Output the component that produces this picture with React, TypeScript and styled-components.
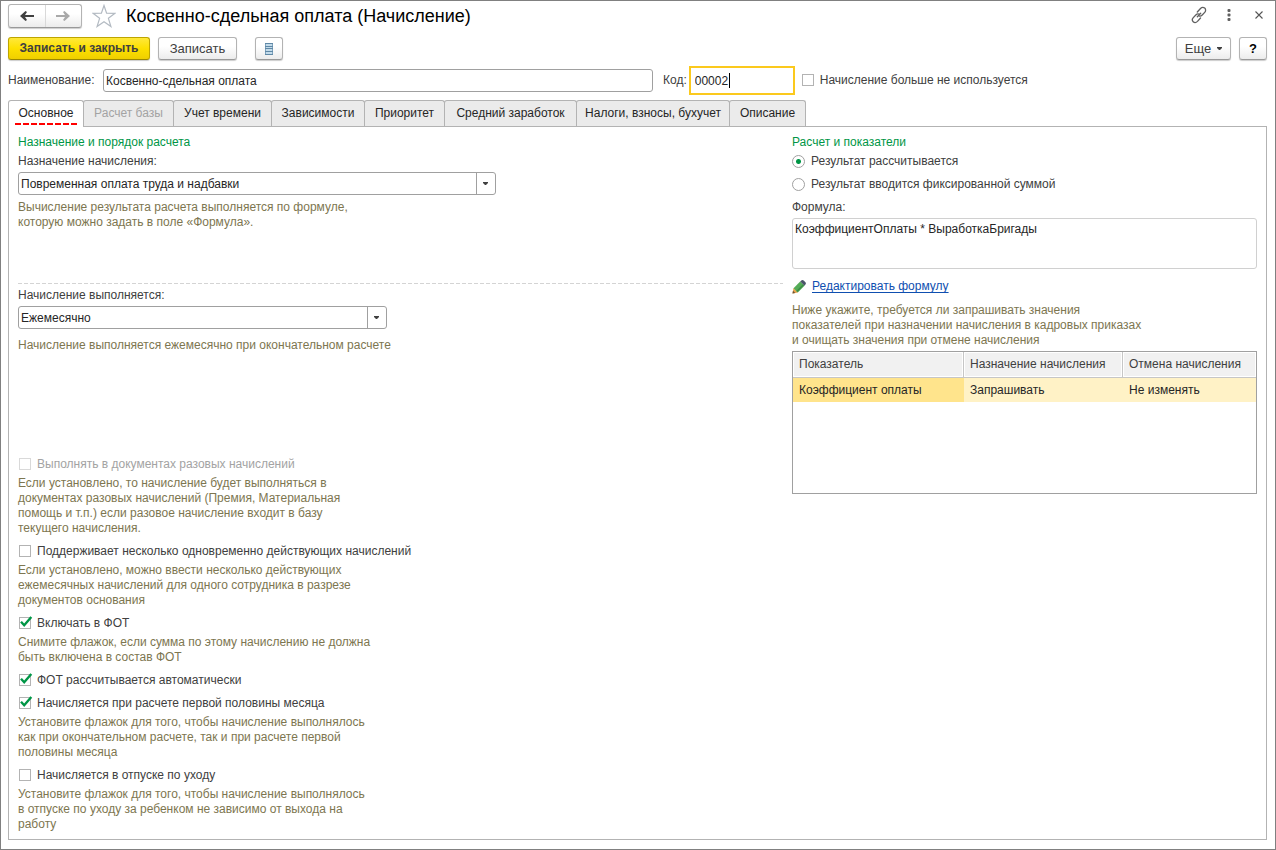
import React, { useState } from "react";
import styled, { createGlobalStyle, css } from "styled-components";

const color = {
  frame: "#808080",
  border: "#a0a0a0",
  soft: "#b3b3b3",
  text: "#404040",
  dark: "#262626",
  hint: "#7d7650",
  green: "#009646",
  muted: "#a3a3a3",
  link: "#0f4fb0",
};

const GlobalStyle = createGlobalStyle`
  *, *::before, *::after { box-sizing: border-box; }
  body { margin: 0; background: #fff; }
  body, button, input, select, textarea {
    font-family: "Liberation Sans", Arial, sans-serif;
    font-size: 12px;
    line-height: 15px;
    color: ${color.text};
  }
`;

const Window = styled.main`
  display: flex;
  flex-direction: column;
  min-height: 100vh;
  padding: 2px 8px 9px 7px;
  border: 1px solid ${color.frame};
`;

const Row = styled.div<{ $gap?: number }>`
  display: flex;
  align-items: center;
  gap: ${(p) => p.$gap ?? 8}px;
`;

const TitleBar = styled(Row)`
  height: 25px;
`;

const Spacer = styled.div`
  flex: 1;
`;

const Title = styled.h1`
  margin: 0;
  font-size: 18px;
  line-height: 24px;
  font-weight: 400;
  color: #000;
  white-space: nowrap;
`;

const raised = css`
  border: 1px solid ${color.soft};
  border-bottom-color: #999;
  border-radius: 3px;
  background: linear-gradient(#fff 40%, #ececec);
  box-shadow: 0 1px 1px #ccc;
`;

const History = styled.div`
  ${raised}
  display: flex;
  width: 74px;
  height: 24px;
`;

const HistoryButton = styled.button`
  display: flex;
  flex: 1;
  align-items: center;
  justify-content: center;
  padding: 0;
  border: 0;
  background: none;

  & + & {
    border-left: 1px solid #d9d9d9;
  }
`;

const IconButton = styled.button`
  display: flex;
  align-items: center;
  justify-content: center;
  width: 24px;
  height: 24px;
  padding: 0;
  border: 0;
  background: none;
`;

const WindowTools = styled(Row)`
  gap: 6px;
  align-self: flex-start;
  margin-right: -4px;
`;

const Toolbar = styled(Row)`
  margin-top: 9px;
`;

const Button = styled.button<{ $primary?: boolean; $width: number }>`
  ${raised}
  display: flex;
  align-items: center;
  justify-content: center;
  gap: 6px;
  width: ${(p) => p.$width}px;
  height: 23px;
  padding: 0;
  font-size: 13px;
  white-space: nowrap;
  ${(p) =>
    p.$primary &&
    css`
      border-color: #bda500;
      border-bottom-color: #9c8800;
      background: linear-gradient(#ffe83a, #fde000 50%, #efcf00);
      font-size: 12px;
      font-weight: 700;
    `}
`;

const HelpMark = styled.b`
  color: #000;
`;

const Detached = styled.div`
  margin-left: 10px;
`;

const Fields = styled(Row)`
  height: 29px;
  margin-top: 6px;
`;

const Label = styled.label`
  display: block;
  white-space: nowrap;
`;

const NameField = styled.div`
  display: grid;
  grid-template-columns: 90px 1fr;
  align-items: center;
  gap: 5px;
  width: 645px;
  margin-right: 3px;
`;

const TextInput = styled.input`
  min-width: 0;
  height: 23px;
  padding: 0 2px;
  border: 1px solid ${color.border};
  border-radius: 3px;
  color: ${color.dark};
`;

const CodeBox = styled.div`
  display: grid;
  align-items: center;

  & > * {
    grid-area: 1 / 1;
  }
`;

const CodeInput = styled.input`
  width: 106px;
  height: 29px;
  padding: 0 4px;
  border: 2px solid #fbc91d;
  outline: none;
  color: ${color.dark};
  caret-color: transparent;
`;

const TextCursor = styled.span`
  width: 1px;
  height: 15px;
  margin-left: 40px;
  background: #000;
  pointer-events: none;
`;

const Tabs = styled.div`
  display: flex;
  margin-top: 5px;
`;

const Tab = styled.button<{ $active?: boolean; $width: number }>`
  width: ${(p) => p.$width}px;
  height: 26px;
  margin-right: -1px;
  padding: 0;
  border: 1px solid ${color.soft};
  border-bottom: 0;
  border-radius: 3px 3px 0 0;
  background: #ebebeb;
  color: ${color.dark};
  white-space: nowrap;

  &:disabled {
    color: ${color.muted};
  }

  ${(p) =>
    p.$active &&
    css`
      z-index: 1;
      height: 27px;
      margin-bottom: -1px;
      padding: 0 6px;
      background: #fff;
    `}
`;

const TabText = styled.span<{ $active?: boolean }>`
  display: block;
  ${(p) =>
    p.$active &&
    css`
      padding: 4px 0 5px;
      background: repeating-linear-gradient(90deg, #f00 0 6px, #fff 6px 8px) 0 21px / 100% 2px no-repeat;
    `}
`;

const Panel = styled.section`
  display: grid;
  flex: 1;
  grid-template-columns: minmax(0, 51fr) minmax(0, 31fr);
  gap: 9px;
  padding: 8px 9px 7px;
  border: 1px solid ${color.soft};
`;

const Column = styled.div`
  display: flex;
  flex-direction: column;
`;

const Heading = styled.h2`
  margin: 0 0 4px;
  font-size: 12px;
  line-height: 15px;
  font-weight: 400;
  color: ${color.green};
`;

const Section = styled.div<{ $height: number }>`
  min-height: ${(p) => p.$height}px;
`;

const DividedSection = styled(Section)`
  padding-top: 5px;
  background: repeating-linear-gradient(90deg, #d4d4d4 0 4px, #fff 4px 6px) top / 100% 1px no-repeat;
`;

const Hint = styled.p`
  margin: 0;
  color: ${color.hint};
  white-space: pre-line;
`;

const SelectBox = styled.div<{ $width: number; $after: number }>`
  display: grid;
  width: ${(p) => p.$width}px;
  height: 23px;
  margin: 3px 0 ${(p) => p.$after}px;
  border: 1px solid ${color.border};
  border-radius: 3px;

  & > * {
    grid-area: 1 / 1;
  }
`;

const NativeSelect = styled.select`
  appearance: none;
  width: 100%;
  padding: 1px 20px 0 2px;
  border: 0;
  background: none;
  color: ${color.dark};
`;

const SelectArrow = styled.span`
  display: flex;
  align-items: center;
  justify-content: center;
  justify-self: end;
  width: 19px;
  padding-right: 1px;
  border-left: 1px solid ${color.border};
  pointer-events: none;
`;

const Options = styled.div`
  display: flex;
  flex-direction: column;
  gap: 8px;
`;

const Option = styled.div`
  display: flex;
  flex-direction: column;
  gap: 4px;
`;

const Choice = styled.label<{ $disabled?: boolean }>`
  display: flex;
  align-items: center;
  gap: 6px;
  width: fit-content;
  white-space: nowrap;
  color: ${(p) => (p.$disabled ? color.muted : color.text)};
`;

const CheckHolder = styled.span`
  display: grid;
  flex: none;
  margin-bottom: 1px;

  & > * {
    grid-area: 1 / 1;
  }

  & > svg {
    display: none;
    overflow: visible;
    pointer-events: none;
  }

  & > input:checked + svg {
    display: block;
  }
`;

const CheckInput = styled.input`
  appearance: none;
  width: 12px;
  height: 12px;
  margin: 0;
  border: 1px solid ${color.soft};
  background: #fff;

  &:disabled {
    border-color: #d9d9d9;
  }
`;

const OptionIndent = styled.div`
  padding-left: 1px;
`;

const RadioInput = styled.input`
  appearance: none;
  width: 13px;
  height: 13px;
  margin: 0;
  border: 1px solid ${color.border};
  border-radius: 50%;

  &:checked {
    background: radial-gradient(circle, ${color.green} 2px, #fff 3px);
  }
`;

const RadioGroup = styled.div`
  display: flex;
  flex-direction: column;
  gap: 8px;
  margin-bottom: 8px;
`;

const Formula = styled.textarea`
  display: block;
  width: 100%;
  height: 51px;
  margin: 3px 0 10px;
  padding: 3px 2px;
  border: 1px solid #d0d0d0;
  border-radius: 3px;
  resize: none;
  color: ${color.dark};
`;

const EditRow = styled(Row)`
  margin-bottom: 9px;
`;

const Link = styled.a`
  color: ${color.link};
  text-decoration: underline;
  text-underline-offset: 2px;
`;

const TableBox = styled.div`
  height: 143px;
  margin-top: 3px;
  border: 1px solid ${color.border};
`;

const Table = styled.table`
  width: 100%;
  border-collapse: separate;
  border-spacing: 0;
  table-layout: fixed;
`;

const HeadCell = styled.th<{ $width?: string }>`
  width: ${(p) => p.$width ?? "auto"};
  height: 26px;
  padding: 0 6px 1px;
  border-right: 1px solid #c6c6c6;
  border-bottom: 1px solid #c6c6c6;
  background: #f1f1f1;
  box-shadow: inset 0 0 0 1px #fff;
  font-weight: 400;
  text-align: left;
  white-space: nowrap;

  &:last-child {
    border-right: 0;
  }
`;

const Cell = styled.td<{ $current?: boolean }>`
  height: 24px;
  padding: 0 6px;
  background: ${(p) => (p.$current ? "#ffe48c" : "#fff2c6")};
  color: ${color.dark};
`;

const ArrowIcon = ({ forward }: { forward?: boolean }) => {
  const tone = forward ? "#a9a9a9" : "#404040";
  return (
    <svg width="14" height="10" viewBox="0 0 14 10" fill={tone}>
      {forward ? (
        <path d="M0 4h9L7 1l1.500-1L14 5l-5.500 5L7 9l2-3H0z" />
      ) : (
        <path d="M14 4H5l2-3-1.500-1L0 5l5.500 5L7 9 5 6h9z" />
      )}
    </svg>
  );
};

const StarIcon = () => (
  <svg width="24" height="24" viewBox="0 0 24 24" fill="#fff" stroke="#b3bac2" strokeWidth="1.200">
    <path d="M12 1.500l2.600 7.700 8.400.1-6.600 5 2.500 8.200-6.900-4.800-6.900 4.800 2.500-8.200-6.600-5 8.400-.1z" />
  </svg>
);

const LinkIcon = () => (
  <svg width="18" height="18" viewBox="0 0 18 18" fill="none" stroke="#606060" strokeWidth="1.300" strokeLinecap="round">
    <path d="M7.300 6l3.200-3.500c1.400-1.400 3.100-1.300 4.200-.4s1.300 2.900 0 4.300L12.200 9c-1.100 1.100-2.300 1.200-3.200.9" />
    <path d="M10.500 12l-3 3.400c-1.400 1.400-3.300 1.300-4.300.3s-1.200-2.700.1-4.100L5.800 9c1.100-1.100 2.400-1.200 3.300-.8" />
    <path d="M7.300 10.700l3.400-3.500" />
  </svg>
);

const DotsIcon = () => (
  <svg width="4" height="12" viewBox="0 0 4 12" fill="#606060">
    <rect x="0.500" y="0" width="3" height="3" rx="1" />
    <rect x="0.500" y="4.500" width="3" height="3" rx="1" />
    <rect x="0.500" y="9" width="3" height="3" rx="1" />
  </svg>
);

const CloseIcon = () => (
  <svg width="8" height="8" viewBox="0 0 8 8" stroke="#555" strokeWidth="1.100">
    <path d="M.5.5l7 7M7.500.5l-7 7" />
  </svg>
);

const ListIcon = () => (
  <svg width="8" height="12" viewBox="0 0 8 12">
    <rect x="0.500" y="0.500" width="7" height="11" fill="#c3dbea" stroke="#7da2bd" />
    <path d="M0 .5h8M0 3.500h8M0 5.500h8M0 8.500h8M0 11.500h8" stroke="#5f88a6" />
  </svg>
);

const CaretIcon = () => (
  <svg width="5" height="3" viewBox="0 0 5 3" fill="#404040">
    <path d="M0 0h5v1L3 3H2L0 1z" />
  </svg>
);

const CheckIcon = () => (
  <svg width="12" height="12" viewBox="0 0 12 12" fill="none" stroke={color.green} strokeWidth="2.400">
    <path d="M2 4.800l3.200 3.400L12.300 0" />
  </svg>
);

const PencilIcon = () => (
  <svg width="14" height="14" viewBox="0 0 14 14">
    <path d="M.5 13.500L1.500 8l4.500 4.500z" fill="#e9a54b" />
    <path d="M.5 13.500l.5-2.800 2.300 2.300z" fill="#6b5138" />
    <path d="M1.500 8.200L8.200 1.500l4.300 4.300L5.800 12.500z" fill="#55ac58" />
    <path d="M4.800 11.500l6.700-6.700" stroke="#3b8c45" strokeWidth="1.500" />
    <path d="M8.200 1.500L9.700.2q1-.5 2 .3l1.700 1.700q.9 1 .2 2l-1.100 1.600z" fill="#4a5568" />
  </svg>
);

function Check({ label, checked, disabled }: { label: string; checked?: boolean; disabled?: boolean }) {
  return (
    <Choice $disabled={disabled}>
      <CheckHolder>
        <CheckInput type="checkbox" defaultChecked={checked} disabled={disabled} />
        <CheckIcon />
      </CheckHolder>
      {label}
    </Choice>
  );
}

function Select({ id, value, width, after }: { id: string; value: string; width: number; after: number }) {
  return (
    <SelectBox $width={width} $after={after}>
      <NativeSelect id={id}>
        <option>{value}</option>
      </NativeSelect>
      <SelectArrow>
        <CaretIcon />
      </SelectArrow>
    </SelectBox>
  );
}

const tabs = [
  { label: "Основное", width: 76 },
  { label: "Расчет базы", width: 91 },
  { label: "Учет времени", width: 99 },
  { label: "Зависимости", width: 94 },
  { label: "Приоритет", width: 81 },
  { label: "Средний заработок", width: 133 },
  { label: "Налоги, взносы, бухучет", width: 154 },
  { label: "Описание", width: 77 },
];

const options = [
  {
    label: "Выполнять в документах разовых начислений",
    disabled: true,
    hint: "Если установлено, то начисление будет выполняться в\nдокументах разовых начислений (Премия, Материальная\nпомощь и т.п.) если разовое начисление входит в базу\nтекущего начисления.",
  },
  {
    label: "Поддерживает несколько одновременно действующих начислений",
    hint: "Если установлено, можно ввести несколько действующих\nежемесячных начислений для одного сотрудника в разрезе\nдокументов основания",
  },
  {
    label: "Включать в ФОТ",
    checked: true,
    hint: "Снимите флажок, если сумма по этому начислению не должна\nбыть включена в состав ФОТ",
  },
  { label: "ФОТ рассчитывается автоматически", checked: true },
  {
    label: "Начисляется при расчете первой половины месяца",
    checked: true,
    hint: "Установите флажок для того, чтобы начисление выполнялось\nкак при окончательном расчете, так и при расчете первой\nполовины месяца",
  },
  {
    label: "Начисляется в отпуске по уходу",
    hint: "Установите флажок для того, чтобы начисление выполнялось\nв отпуске по уходу за ребенком не зависимо от выхода на\nработу",
  },
];

export default function App() {
  const [active, setActive] = useState(0);

  return (
    <>
      <GlobalStyle />
      <Window>
        <TitleBar>
          <Row $gap={10}>
            <History>
              <HistoryButton aria-label="Назад">
                <ArrowIcon />
              </HistoryButton>
              <HistoryButton aria-label="Вперед">
                <ArrowIcon forward />
              </HistoryButton>
            </History>
            <IconButton aria-label="В избранное">
              <StarIcon />
            </IconButton>
            <Title>Косвенно-сдельная оплата (Начисление)</Title>
          </Row>
          <Spacer />
          <WindowTools>
            <IconButton aria-label="Получить ссылку">
              <LinkIcon />
            </IconButton>
            <IconButton aria-label="Меню">
              <DotsIcon />
            </IconButton>
            <IconButton aria-label="Закрыть">
              <CloseIcon />
            </IconButton>
          </WindowTools>
        </TitleBar>

        <Toolbar>
          <Button $primary $width={142}>Записать и закрыть</Button>
          <Button $width={79}>Записать</Button>
          <Detached>
            <Button $width={28} aria-label="Список">
              <ListIcon />
            </Button>
          </Detached>
          <Spacer />
          <Button $width={55}>
            Еще <CaretIcon />
          </Button>
          <Button $width={28}>
            <HelpMark>?</HelpMark>
          </Button>
        </Toolbar>

        <Fields $gap={7}>
          <NameField>
            <Label htmlFor="name">Наименование:</Label>
            <TextInput id="name" defaultValue="Косвенно-сдельная оплата" />
          </NameField>
          <Row $gap={2}>
            <Label htmlFor="code">Код:</Label>
            <CodeBox>
              <CodeInput id="code" defaultValue="00002" />
              <TextCursor />
            </CodeBox>
          </Row>
          <Check label="Начисление больше не используется" />
        </Fields>

        <Tabs role="tablist">
          {tabs.map((tab, i) => (
            <Tab
              key={tab.label}
              role="tab"
              aria-selected={i === active}
              $active={i === active}
              $width={tab.width}
              disabled={i === 1}
              onClick={() => setActive(i)}
            >
              <TabText $active={i === active}>{tab.label}</TabText>
            </Tab>
          ))}
        </Tabs>

        <Panel>
          <Column>
            <Heading>Назначение и порядок расчета</Heading>
            <Section $height={129}>
              <Label htmlFor="purpose">Назначение начисления:</Label>
              <Select id="purpose" value="Повременная оплата труда и надбавки" width={478} after={5} />
              <Hint>{"Вычисление результата расчета выполняется по формуле,\nкоторую можно задать в поле «Формула»."}</Hint>
            </Section>
            <DividedSection $height={174}>
              <Label htmlFor="period">Начисление выполняется:</Label>
              <Select id="period" value="Ежемесячно" width={369} after={9} />
              <Hint>Начисление выполняется ежемесячно при окончательном расчете</Hint>
            </DividedSection>
            <Options>
              {options.map((o) => (
                <Option key={o.label}>
                  <OptionIndent>
                    <Check label={o.label} checked={o.checked} disabled={o.disabled} />
                  </OptionIndent>
                  {o.hint && <Hint>{o.hint}</Hint>}
                </Option>
              ))}
            </Options>
          </Column>

          <Column>
            <Heading>Расчет и показатели</Heading>
            <RadioGroup role="radiogroup">
              <Choice>
                <RadioInput type="radio" name="result" defaultChecked />
                Результат рассчитывается
              </Choice>
              <Choice>
                <RadioInput type="radio" name="result" />
                Результат вводится фиксированной суммой
              </Choice>
            </RadioGroup>
            <Label htmlFor="formula">Формула:</Label>
            <Formula id="formula" readOnly value="КоэффициентОплаты * ВыработкаБригады" />
            <EditRow $gap={6}>
              <PencilIcon />
              <Link href="#formula">Редактировать формулу</Link>
            </EditRow>
            <Hint>{"Ниже укажите, требуется ли запрашивать значения\nпоказателей при назначении начисления в кадровых приказах\nи очищать значения при отмене начисления"}</Hint>
            <TableBox>
              <Table>
                <thead>
                  <tr>
                    <HeadCell $width="171px">Показатель</HeadCell>
                    <HeadCell $width="159px">Назначение начисления</HeadCell>
                    <HeadCell>Отмена начисления</HeadCell>
                  </tr>
                </thead>
                <tbody>
                  <tr>
                    <Cell $current>Коэффициент оплаты</Cell>
                    <Cell>Запрашивать</Cell>
                    <Cell>Не изменять</Cell>
                  </tr>
                </tbody>
              </Table>
            </TableBox>
          </Column>
        </Panel>
      </Window>
    </>
  );
}
